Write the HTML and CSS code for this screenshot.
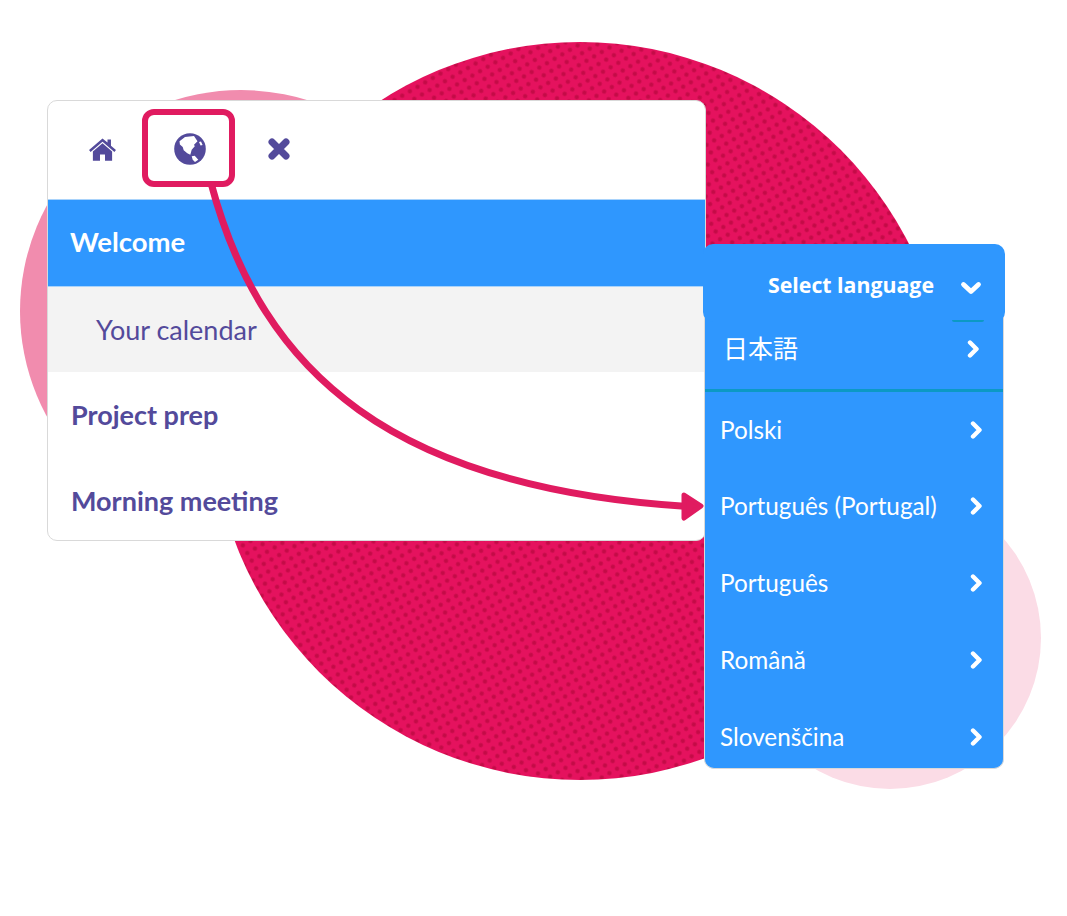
FILE: index.html
```html
<!DOCTYPE html>
<html lang="en">
<head>
<meta charset="utf-8">
<title>Select language</title>
<link rel="stylesheet" href="styles.css">
</head>
<body>
<main class="stage">
  <div class="blob blob-left"></div>
  <div class="blob blob-right"></div>
  <svg class="blob-main" viewBox="0 0 738 738" width="738" height="738">
    <defs>
      <pattern id="dots" patternUnits="userSpaceOnUse" width="8.85" height="8.85" patternTransform="translate(281.3 563.7) rotate(-30) translate(-4.425 -4.425)">
        <rect width="8.85" height="8.85" fill="#e5125e"/>
        <circle cx="4.425" cy="4.425" r="2.2" fill="#c40b47"/>
      </pattern>
    </defs>
    <circle cx="369" cy="369" r="369" fill="url(#dots)"/>
  </svg>

  <section class="card">
    <nav class="toolbar">
      <span class="tool tool-home">
        <svg viewBox="0 0 30 26" width="29" height="25"><path fill="#534a9b" d="M15 1.500 1 13.600l1.600 1.900L15 4.900l12.400 10.600 1.600-1.900-5.200-4.500V2.600h-3.600v3.200zM5 15.200v9.600h7.400v-6.600h5.200v6.600H25v-9.600L15 6.600z"/></svg>
      </span>
      <span class="tool tool-globe">
        <svg viewBox="0 0 32 32" width="32" height="32"><circle cx="16" cy="16" r="15.800" fill="#534a9b"/><path fill="#fff" d="M5.500 8.300 11 4l9-1 3.500 5.300-3.500 3.400.8 1.600-3.100 3.400-1.400 5-3-1.400-3.600-3-1-3.400-2.800-2.400z"/><path fill="#fff" d="M17.700 23.300l3-.6 3.600 4-3.300 2.300-2.300-2.300zM25 9l2-.6 1.600 3.600-2 .6z"/></svg>
      </span>
      <span class="tool tool-close">
        <svg viewBox="0 0 24 24" width="24" height="24"><path fill="none" stroke="#534a9b" stroke-width="7" stroke-linecap="round" d="M5 5l14 14M19 5L5 19"/></svg>
      </span>
    </nav>
    <ul class="menu">
      <li class="menu-item is-active">Welcome</li>
      <li class="menu-item is-sub">Your calendar</li>
      <li class="menu-item">Project prep</li>
      <li class="menu-item">Morning meeting</li>
    </ul>
  </section>

  <section class="dropdown">
    <ul class="lang-list">
      <li class="lang lang-first"><span class="cjk">日本語</span><svg class="chev" viewBox="0 0 12 18" width="12" height="18"><path d="M3 2.500l6.500 6.500L3 15.500"/></svg></li>
      <li class="lang"><span>Polski</span><svg class="chev" viewBox="0 0 12 18" width="12" height="18"><path d="M3 2.500l6.500 6.500L3 15.500"/></svg></li>
      <li class="lang"><span>Português (Portugal)</span><svg class="chev" viewBox="0 0 12 18" width="12" height="18"><path d="M3 2.500l6.500 6.500L3 15.500"/></svg></li>
      <li class="lang"><span>Português</span><svg class="chev" viewBox="0 0 12 18" width="12" height="18"><path d="M3 2.500l6.500 6.500L3 15.500"/></svg></li>
      <li class="lang"><span>Română</span><svg class="chev" viewBox="0 0 12 18" width="12" height="18"><path d="M3 2.500l6.500 6.500L3 15.500"/></svg></li>
      <li class="lang"><span>Slovenščina</span><svg class="chev" viewBox="0 0 12 18" width="12" height="18"><path d="M3 2.500l6.500 6.500L3 15.500"/></svg></li>
    </ul>
    <header class="dropdown-head">
      <span class="head-label">Select language</span>
      <svg class="chev-down" viewBox="0 0 22 14" width="22" height="14"><path d="M3.500 3.500 11 10.500l7.500-7"/></svg>
      <span class="head-rule"></span>
    </header>
  </section>

  <div class="highlight"></div>
  <svg class="arrow" viewBox="0 0 1067 916" width="1067" height="916">
    <path class="arrow-line" d="M211 183C262 375 395 488 688 506.500"/>
    <path class="arrow-head" d="M684 495 701 506 684 518z"/>
  </svg>
</main>
</body>
</html>
```

FILE: styles.css
```css
* { box-sizing: border-box; }
html, body { margin: 0; padding: 0; background: #fff; }
.stage { position: relative; width: 1067px; height: 916px; overflow: hidden; font-family: "Lato", "Noto Sans", sans-serif; }

.blob { position: absolute; border-radius: 50%; }
.blob-left { left: 20px; top: 90px; width: 442px; height: 442px; background: #f18cae; }
.blob-right { left: 739px; top: 487px; width: 302px; height: 302px; background: #fbdce6; }
.blob-main { position: absolute; left: 211px; top: 42px; }

.card {
  position: absolute; left: 47px; top: 100px; width: 659px; height: 441px;
  background: #fff; border: 1px solid #d9d9d9; border-radius: 10px; overflow: hidden;
}
.toolbar { display: flex; align-items: center; height: 98px; padding: 0 0 2px 39px; }
.tool { display: flex; align-items: center; justify-content: center; }
.tool-home { width: 30px; }
.tool-globe { margin-left: 57px; width: 32px; }
.tool-close { margin-left: 61px; width: 24px; }

.menu { list-style: none; margin: 0; padding: 0; }
.menu-item { height: 86px; padding: 0 0 1px 23px; display: flex; align-items: center; font-size: 27px; font-weight: 700; color: #534a9b; }
.menu-item.is-active { height: 88px; padding: 0 0 4px 22px; font-size: 27.5px; background: #2f97fe; color: #fff; border-top: 1px solid #a9d3fb; border-bottom: 1px solid #a9d3fb; }
.menu-item.is-sub { height: 85px; padding: 0 0 0 48px; background: #f3f3f3; font-weight: 400; }

.dropdown { position: absolute; left: 703px; top: 244px; width: 302px; height: 525px; }
.lang-list {
  list-style: none; margin: 0; padding: 0;
  position: absolute; left: 1px; right: 1px; top: 67px; bottom: 0;
  background: #2f97fe; border: 1px solid #d9d9d9; border-top: 0; border-radius: 0 0 10px 10px;
}
.lang { height: 77px; display: flex; align-items: center; justify-content: space-between; padding: 0 21px 0 15px; color: #fff; font-size: 24.3px; }
.lang-first { height: 81px; padding-right: 24px; border-bottom: 3px solid #0c99c4; }
.lang-first .chev { margin-bottom: 2px; }
.lang-first + .lang { height: 75px; }
.lang .cjk { font-family: "Noto Sans CJK JP", sans-serif; font-size: 25px; margin: 0 0 6px 3px; }
.chev { fill: none; stroke: #fff; stroke-width: 4.4px; stroke-linecap: round; stroke-linejoin: round; }
.dropdown-head {
  position: absolute; left: 0; right: 0; top: 0; height: 78px;
  display: flex; align-items: center; justify-content: flex-end; padding: 0 23px 0 0; gap: 26px;
  background: #2f97fe; border-radius: 10px;
}
.head-label { font-family: "Open Sans", sans-serif; font-weight: 700; font-size: 21.3px; color: #fff; margin-top: 5px; padding-bottom: 3px; }
.chev-down { fill: none; stroke: #fff; stroke-width: 4.8px; stroke-linecap: round; stroke-linejoin: round; margin-top: 10px; }
.head-rule { position: absolute; left: 249px; top: 76px; width: 32px; height: 2px; background: #0c99c4; border-radius: 0 0 4px 4px; }

.highlight { position: absolute; left: 142px; top: 109px; width: 93px; height: 78px; border: 6px solid #e01b60; border-radius: 12px; }
.arrow { position: absolute; left: 0; top: 0; pointer-events: none; }
.arrow-line { fill: none; stroke: #e01b60; stroke-width: 7px; }
.arrow-head { fill: #e01b60; stroke: #e01b60; stroke-width: 5px; stroke-linejoin: round; }
```
